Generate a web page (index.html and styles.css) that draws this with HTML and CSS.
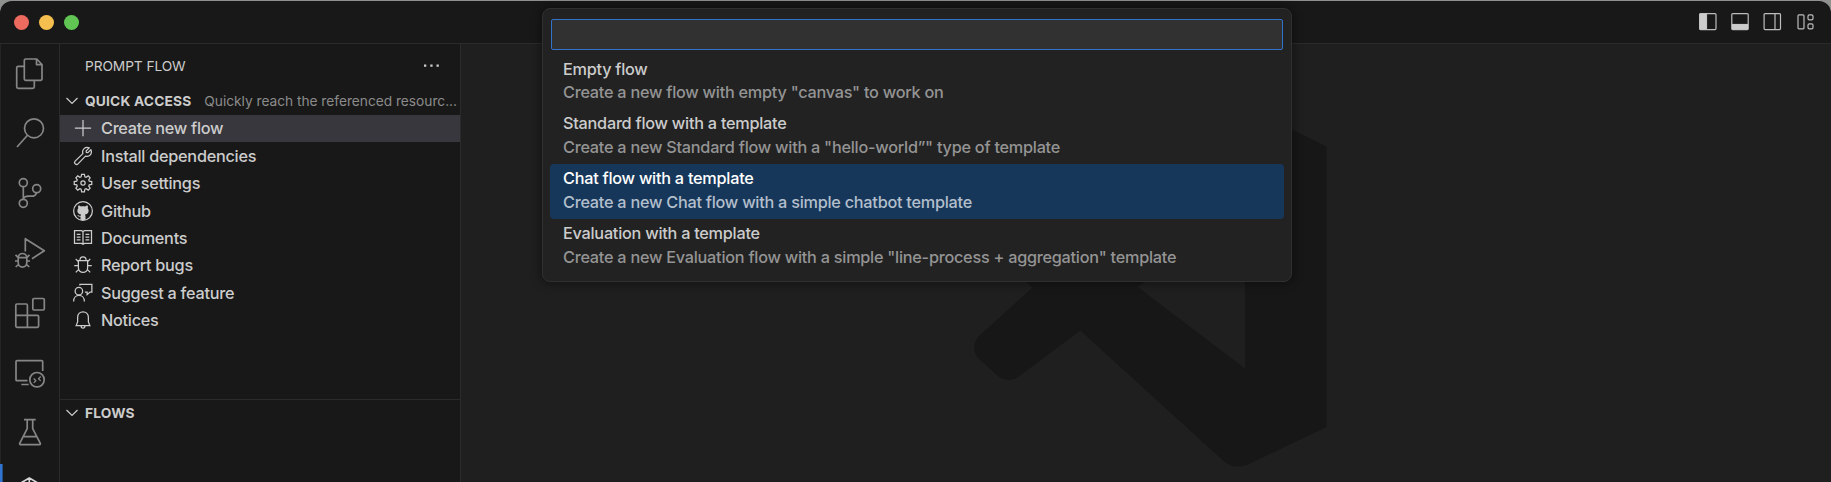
FILE: index.html
```html
<!DOCTYPE html>
<html lang="en">
<head>
<meta charset="utf-8">
<title>Prompt flow</title>
<link rel="stylesheet" href="styles.css">
</head>
<body>
<div class="window">
  <header class="titlebar">
    <div class="lights"><span class="light red"></span><span class="light yellow"></span><span class="light green"></span></div>
    <svg class="layout-icons" viewBox="0 0 118 20" width="118" height="20">
      <g fill="none" stroke="#bdbdbd" stroke-width="1.2">
        <rect x="1.6" y="1.6" width="16.4" height="16" rx="1"/><path d="M8.5 2v15"/>
        <rect x="33.8" y="1.6" width="16.4" height="16" rx="1"/><path d="M34 12.5h16"/>
        <rect x="66.1" y="1.6" width="16.4" height="16" rx="1"/><path d="M77 2v15"/>
        <rect x="100" y="2.8" width="6" height="14" rx="1"/><rect x="110" y="2.8" width="5" height="5" rx="1.4"/><rect x="110" y="11.8" width="5" height="5" rx="1.4"/>
      </g>
      <path fill="#ccc" d="M1.6 1.6h6.900v16H1.600zM33.800 12.200h16.400v5.400H33.800z"/>
    </svg>
  </header>
  <div class="body">
    <nav class="activity">
      <svg viewBox="0 0 60 60"><path d="M24.3 22.3h-6.100a1.500 1.500 0 0 0-1.500 1.500v19a1.500 1.500 0 0 0 1.500 1.500h14.600a1.500 1.500 0 0 0 1.500-1.500v-6.500M25.800 15h10.900l5.300 5.500v14.300a1.500 1.500 0 0 1-1.500 1.500H25.800a1.500 1.500 0 0 1-1.500-1.500V16.500a1.500 1.500 0 0 1 1.500-1.500zM36.500 15v5.600H42"/></svg>
      <svg viewBox="0 0 60 60"><circle cx="34" cy="24.300" r="9.500"/><path d="M27.500 31.200 17 43"/></svg>
      <svg viewBox="0 0 60 60"><circle cx="23.300" cy="18.700" r="4"/><circle cx="36.700" cy="24.700" r="4"/><circle cx="23.300" cy="39.300" r="4"/><path d="M23.300 22.700v12.600M36.500 28.700c-.6 2.600-2.500 3.500-5 3.500h-3c-2.600 0-4.600.8-5.200 3"/></svg>
      <svg viewBox="0 0 60 60"><path d="M25.300 27.500V14.700l19 12-12.300 8M18.200 34c0-6 8.600-6 8.600 0v4.500c0 6.200-8.600 6.200-8.600 0zM18.200 33.700h8.600M18 33.300l-2.500-2.500M27 33.300l2.500-2.500M18 37h-3M27 37h3M18.400 40.500 15.700 43M26.600 40.500l2.700 2.500"/></svg>
      <svg viewBox="0 0 60 60"><rect x="32.800" y="14.500" width="11.500" height="11.500" rx="1.300"/><path d="M17 20h9.200a1.200 1.200 0 0 1 1.200 1.200v10.200h10a1.200 1.200 0 0 1 1.200 1.200v9.500a1.200 1.200 0 0 1-1.200 1.200H17a1.200 1.200 0 0 1-1.200-1.200V21.200A1.200 1.200 0 0 1 17 20zM15.800 31.400h11.600v11.900"/></svg>
      <svg viewBox="0 0 60 60"><path d="M27.500 36.700H17a1 1 0 0 1-1-1v-18a1 1 0 0 1 1-1h24.700a1 1 0 0 1 1 1V27M21.300 40.500h7.400"/><circle cx="37" cy="35.700" r="7.200"/><path class="thin" d="m33.700 34.500 2.200 2.200-2.200 2.200M40.700 32.500l-2.200 2.200 2.200 2.200"/></svg>
      <svg viewBox="0 0 60 60"><path d="M24 15.700h11.700M27.200 15.700v9L19.700 39.400a.9.900 0 0 0 .8 1.300h19a.9.900 0 0 0 .8-1.300L32.700 24.700v-9M23.300 32.700h13.400"/></svg>
      <svg class="active" viewBox="0 0 60 60"><path class="mark" d="M0-2h2.600v60H0z"/><path d="m29.300 14 12 7v14l-12 7-12-7v-14zM29.300 14v10"/></svg>
    </nav>
    <aside class="sidebar">
      <div class="side-title"><span class="name">PROMPT FLOW</span><svg width="20" height="20" viewBox="0 0 20 20"><path fill="#ccc" d="M3 8.500h2.300v2.300H3zM9.300 8.500h2.300v2.300H9.300zM15.500 8.500h2.300v2.300h-2.300z"/></svg></div>
      <div class="section-head"><svg class="chev" viewBox="0 0 16 10"><path d="m2.500 2 5.500 5.500L13.500 2"/></svg><b>QUICK ACCESS</b><span class="hint">Quickly reach the referenced resourc...</span></div>
      <ul class="tree">
        <li class="selected"><svg viewBox="0 0 16 16"><path d="M8 1.500v13M1.500 8h13"/></svg><span>Create new flow</span></li>
        <li><svg viewBox="0 0 16 16"><path d="M14.300 3 11.900 5.300 10.700 5.100 10.500 3.900 12.900 1.500C9.800.2 6.900 2.900 7.900 6.100L1.700 12.100c-1.300 1.500.8 3.600 2.300 2.200L10 8.100c3.200.9 5.700-2 4.300-5.100z"/></svg><span>Install dependencies</span></li>
        <li><svg viewBox="0 0 16 16"><circle cx="8" cy="8" r="1.700"/><path d="M6.900 1h2.200l.4 2 1 .4 1.700-1.100 1.500 1.500-1.100 1.700.4 1 2 .4v2.200l-2 .4-.4 1 1.100 1.700-1.500 1.500-1.700-1.100-1 .4-.4 2H6.900l-.4-2-1-.4-1.700 1.100-1.500-1.500 1.100-1.700-.4-1-2-.4V6.900l2-.4.4-1-1.100-1.700 1.500-1.500 1.700 1.100 1-.4z"/></svg><span>User settings</span></li>
        <li><svg viewBox="0 0 16 16"><circle cx="8" cy="8" r="7.500"/><path class="fill" d="M6 15.200v-2.600c-1.700.3-2-.8-2.700-1.400 1.200-.3 1.400 1 2.700.7.100-.6.300-.9.500-1.100-3-.4-3.700-3.200-2.300-5.100-.3-.8-.2-1.500.1-2.200.9 0 1.500.4 2.200.9 1-.3 2-.3 3 0 .7-.5 1.300-.9 2.200-.9.300.7.400 1.400.1 2.200 1.400 1.900.7 4.700-2.300 5.100.4.400.5 1 .5 1.600v2.800z"/></svg><span>Github</span></li>
        <li><svg viewBox="0 0 16 16"><path d="M1.200 2.100h5.600L8 2.800l1.200-.7h5.600v10.200H9.200L8 13l-1.200-.7H1.200zM8 2.800V13M3 5h3M3 7.200h3M3 9.400h3M10 5h3M10 7.200h3M10 9.400h3"/></svg><span>Documents</span></li>
        <li><svg viewBox="0 0 16 16"><path d="M5.500 4.500C5.500.400 10.500.400 10.500 4.500M4.300 4.500h7.400v5.700c0 5-7.400 5-7.400 0zM4.300 5.300 2.200 3.200M11.700 5.300l2.100-2.100M4.300 8.500H1M11.700 8.500H15M4.600 11.500l-2.400 2.400M11.400 11.500l2.400 2.400"/></svg><span>Report bugs</span></li>
        <li><svg viewBox="0 0 16 16"><circle cx="4.700" cy="6.500" r="3"/><path d="M.5 14.700c0-6.400 8.600-6.400 8.600 0M5.500 2V1.100h9.600v6.200h-1.500l-2.300 2V7.300H9.500"/></svg><span>Suggest a feature</span></li>
        <li><svg viewBox="0 0 16 16"><path d="M2.500 12.500 3.700 9.500V6c0-6 8.600-6 8.600 0v3.500l1.200 3zM6.500 12.700c0 2.300 3 2.300 3 0"/></svg><span>Notices</span></li>
      </ul>
      <div class="section-head flows"><svg class="chev" viewBox="0 0 16 10"><path d="m2.500 2 5.500 5.500L13.500 2"/></svg><b>FLOWS</b></div>
    </aside>
    <main class="editor">
      <svg class="watermark" viewBox="461 44 1370 438"><path fill-rule="evenodd" d="M1240 104 1326.500 146.500V427L1248 464.500Q1234 470 1223 460.500L1080.300 330.500 1019 376.500Q1008 384 998 376L978.500 358.500Q969.500 347.500 978.500 336.500L1032.500 287.500 978 240 1080 240zM1137.700 287 1245 368.500V206z"/></svg>
    </main>
  </div>
  <section class="picker">
    <div class="input"></div>
    <ul class="options">
      <li><span>Empty flow</span><small>Create a new flow with empty "canvas" to work on</small></li>
      <li><span>Standard flow with a template</span><small>Create a new Standard flow with a "hello-world”" type of template</small></li>
      <li class="focused"><span>Chat flow with a template</span><small>Create a new Chat flow with a simple chatbot template</small></li>
      <li><span>Evaluation with a template</span><small>Create a new Evaluation flow with a simple "line-process + aggregation" template</small></li>
    </ul>
  </section>
</div>
</body>
</html>
```
FILE: styles.css
```css
* { box-sizing: border-box; }
body { margin: 0; height: 482px; overflow: hidden; background: #8f918f; font-family: Inter, "Liberation Sans", sans-serif; color: #ccc; }
ul { margin: 0; padding: 0; list-style: none; }
.window { position: relative; display: flex; flex-direction: column; height: 482px; padding-top: 1px; border-radius: 12px 12px 0 0; overflow: hidden; }
.titlebar { display: flex; flex: none; justify-content: space-between; align-items: center; height: 43px; padding: 0 15px 0 14px; border-bottom: 1px solid #2b2b2b; background: #181818; border-radius: 12px 12px 0 0; }
.lights { display: flex; gap: 10px; }
.light { width: 15px; height: 15px; border-radius: 50%; }
.red { background: #ed6a5e; }
.yellow { background: #f5bf4f; }
.green { background: #61c554; }
.body { display: flex; flex: 1; min-height: 0; }
.activity { flex: none; width: 60px; border-right: 1px solid #2b2b2b; background: #181818; box-shadow: inset 1px 0 #242424; overflow: hidden; }
.activity svg { display: block; width: 60px; height: 60px; fill: none; stroke: #868686; stroke-width: 1.700; stroke-linejoin: round; }
.activity .thin { stroke-width: 1.300; }
.activity .active { stroke: #d7d7d7; }
.activity .mark { fill: #3174cf; stroke: none; }
.sidebar { flex: none; display: flex; flex-direction: column; width: 401px; border-right: 1px solid #2b2b2b; background: #181818; }
.side-title { display: flex; justify-content: space-between; align-items: center; height: 43px; padding: 0 19px 0 25px; font-size: 13.750px; }
.name { letter-spacing: -.1px; }
.section-head { display: flex; align-items: center; height: 27.500px; padding-left: 4px; font-size: 13.750px; white-space: nowrap; }
.section-head b { margin-left: 5px; letter-spacing: .17px; }
.chev { width: 16px; height: 10px; fill: none; stroke: #ccc; stroke-width: 1.200; }
.hint { margin-left: 13px; letter-spacing: -.03px; color: #8b8b8b; }
.tree { flex: none; height: 284.500px; }
.tree li { display: flex; align-items: center; gap: 8px; height: 27.450px; padding-left: 13px; font-size: 16.250px; font-weight: 450; letter-spacing: -.26px; white-space: nowrap; }
.tree .selected { background: #37373d; }
.tree svg { width: 20px; height: 20px; fill: none; stroke: #ccc; stroke-width: 1; }
.tree .fill { fill: #ccc; stroke: none; }
.flows { border-top: 1px solid #2b2b2b; }
.editor { flex: 1; background: #1f1f1f; }
.watermark { display: block; width: 1370px; height: 438px; fill: #171717; }
.picker { position: absolute; left: 542px; top: 8px; width: 750px; height: 274px; padding: 10px 7px 0; border: 1px solid #303030; border-radius: 8px; background: #222; box-shadow: 0 0 10px 2px rgba(0,0,0,.36); }
.input { height: 31px; margin: 0 1px 0 .5px; border: 1px solid #3272c8; border-radius: 2px; background: #313131; }
.options { padding-top: 4.500px; }
.options li { display: flex; flex-direction: column; height: 54.900px; padding: 3px 13px 0; border-radius: 4px; font-size: 16.250px; font-weight: 450; letter-spacing: -.25px; line-height: 23.500px; white-space: nowrap; }
.options small { font-size: 16.250px; color: #949494; }
.options .focused { background: #17375a; color: #fff; }
.focused small { color: #b3bfcc; }
```
